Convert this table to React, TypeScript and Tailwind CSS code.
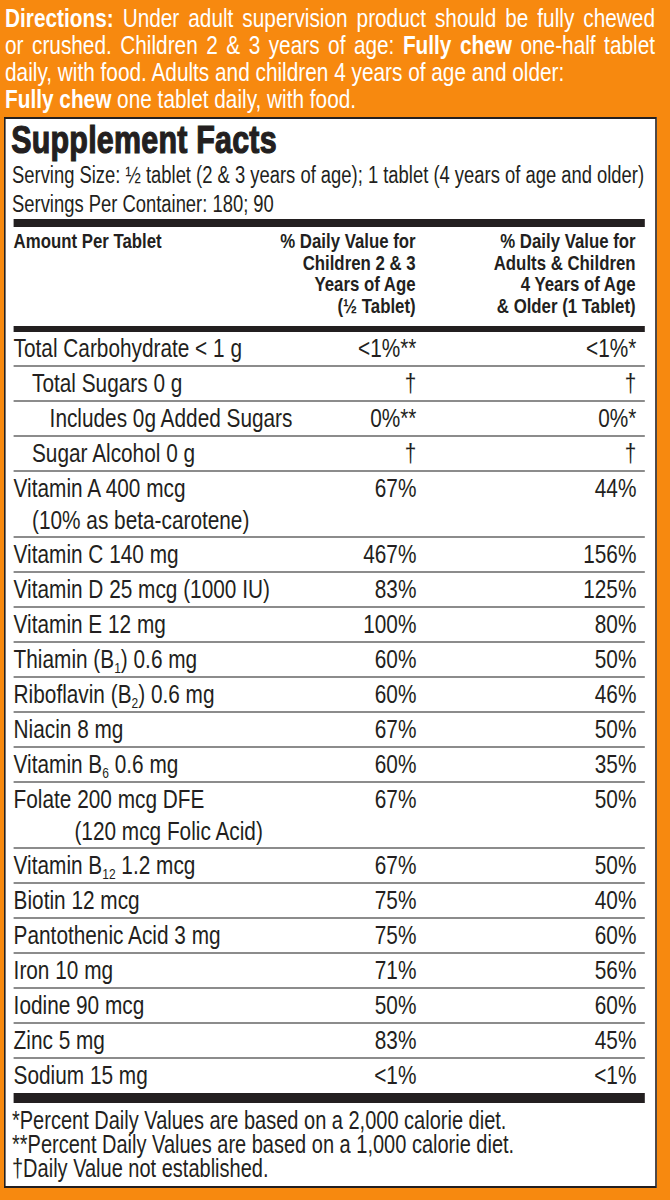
// The label face is a condensed grotesque; we draw Liberation Sans and squeeze the
// whole sheet horizontally by 0.8, so every width below is in unscaled pixels.
const sans = "font-['Liberation_Sans',Arial,sans-serif]";

type Row = {
  label: React.ReactNode;
  sub?: string;
  indent?: string;
  subIndent?: string;
  kids: string;
  adults: string;
};

const Sub = ({ children }: { children: string }) => (
  <span className="text-[15px] leading-[0] relative top-[5px]">{children}</span>
);

const rows: Row[] = [
  { label: 'Total Carbohydrate < 1 g', kids: '<1%**', adults: '<1%*' },
  { label: 'Total Sugars 0 g', indent: 'pl-[23px]', kids: '†', adults: '†' },
  { label: 'Includes 0g Added Sugars', indent: 'pl-[45px]', kids: '0%**', adults: '0%*' },
  { label: 'Sugar Alcohol 0 g', indent: 'pl-[23px]', kids: '†', adults: '†' },
  { label: 'Vitamin A 400 mcg', sub: '(10% as beta-carotene)', subIndent: 'pl-[23px]', kids: '67%', adults: '44%' },
  { label: 'Vitamin C 140 mg', kids: '467%', adults: '156%' },
  { label: 'Vitamin D 25 mcg (1000 IU)', kids: '83%', adults: '125%' },
  { label: 'Vitamin E 12 mg', kids: '100%', adults: '80%' },
  { label: <>Thiamin (B<Sub>1</Sub>) 0.6 mg</>, kids: '60%', adults: '50%' },
  { label: <>Riboflavin (B<Sub>2</Sub>) 0.6 mg</>, kids: '60%', adults: '46%' },
  { label: 'Niacin 8 mg', kids: '67%', adults: '50%' },
  { label: <>Vitamin B<Sub>6</Sub> 0.6 mg</>, kids: '60%', adults: '35%' },
  { label: 'Folate 200 mcg DFE', sub: '(120 mcg Folic Acid)', subIndent: 'pl-[76px]', kids: '67%', adults: '50%' },
  { label: <>Vitamin B<Sub>12</Sub> 1.2 mcg</>, kids: '67%', adults: '50%' },
  { label: 'Biotin 12 mcg', kids: '75%', adults: '40%' },
  { label: 'Pantothenic Acid 3 mg', kids: '75%', adults: '60%' },
  { label: 'Iron 10 mg', kids: '71%', adults: '56%' },
  { label: 'Iodine 90 mcg', kids: '50%', adults: '60%' },
  { label: 'Zinc 5 mg', kids: '83%', adults: '45%' },
  { label: 'Sodium 15 mg', kids: '<1%', adults: '<1%' },
];

export default function App() {
  return (
    <div className="w-[670px] h-[1200px] bg-[#f7890f] overflow-hidden">
      <div className={`w-[837.5px] h-[1200px] origin-top-left scale-x-[0.8] ${sans} text-[#231f20] whitespace-nowrap`}>
        {/* Directions */}
        <div className="ml-[6.25px] w-[812.5px] pt-[4.5px] text-white text-[26px] leading-[27px]">
          <div className="[text-align-last:justify]">
            <b>Directions:</b> Under adult supervision product should be fully chewed
          </div>
          <div className="[text-align-last:justify]">
            or crushed. Children 2 &amp; 3 years of age: <b>Fully chew</b> one-half tablet
          </div>
          <div>daily, with food. Adults and children 4 years of age and older:</div>
          <div>
            <b>Fully chew</b> one tablet daily, with food.
          </div>
        </div>

        {/* Facts panel */}
        <div className="ml-[5px] mt-[4.5px] w-[816.25px] h-[1071px] border-y-2 border-x-[2.5px] border-[#231f20] bg-white pl-[10px] pr-[13.75px]">
          <h1 className="font-bold text-[38px] leading-[42px] tracking-[0.3px] -ml-[3px] [-webkit-text-stroke:1.2px_#231f20]">
            Supplement Facts
          </h1>
          <div className="text-[23px] leading-[29px] -ml-[2px]">
            Serving Size: ½ tablet (2 &amp; 3 years of age); 1 tablet (4 years of age and older)
          </div>
          <div className="text-[23px] leading-[29px] -ml-[2px]">Servings Per Container: 180; 90</div>

          <div className="h-[8px] bg-[#231f20]" />

          {/* column header */}
          <div className="grid grid-cols-[502.5px_285px] font-bold text-[21px] leading-[21.5px] pt-[3px] pb-[10px]">
            <div className="flex justify-between">
              <span>Amount Per Tablet</span>
              <span className="text-right">
                % Daily Value for
                <br />
                Children 2 &amp; 3
                <br />
                Years of Age
                <br />
                (½ Tablet)
              </span>
            </div>
            <div className="text-right pr-[10px]">
              % Daily Value for
              <br />
              Adults &amp; Children
              <br />
              4 Years of Age
              <br />
              &amp; Older (1 Tablet)
            </div>
          </div>

          <div className="h-[6px] bg-[#231f20]" />

          {rows.map((r, i) => (
            <div
              key={i}
              className={`grid grid-cols-[minmax(0,1fr)_190px_285px] text-[26px] leading-[33px] ${
                i < rows.length - 1 ? 'border-b-2 border-[#8c8c8c]' : ''
              }`}
            >
              <div className={r.indent}>
                <div>{r.label}</div>
                {r.sub && <div className={`${r.subIndent} leading-[31px]`}>{r.sub}</div>}
              </div>
              <div className="text-right">{r.kids}</div>
              <div className="text-right pr-[10px]">{r.adults}</div>
            </div>
          ))}

          <div className="h-[10px] bg-[#231f20] mt-[1px]" />

          <div className="text-[25px] leading-[24px] pt-[5px] -ml-[2px]">
            <div>*Percent Daily Values are based on a 2,000 calorie diet.</div>
            <div>**Percent Daily Values are based on a 1,000 calorie diet.</div>
            <div>†Daily Value not established.</div>
          </div>
        </div>
      </div>
    </div>
  );
}
